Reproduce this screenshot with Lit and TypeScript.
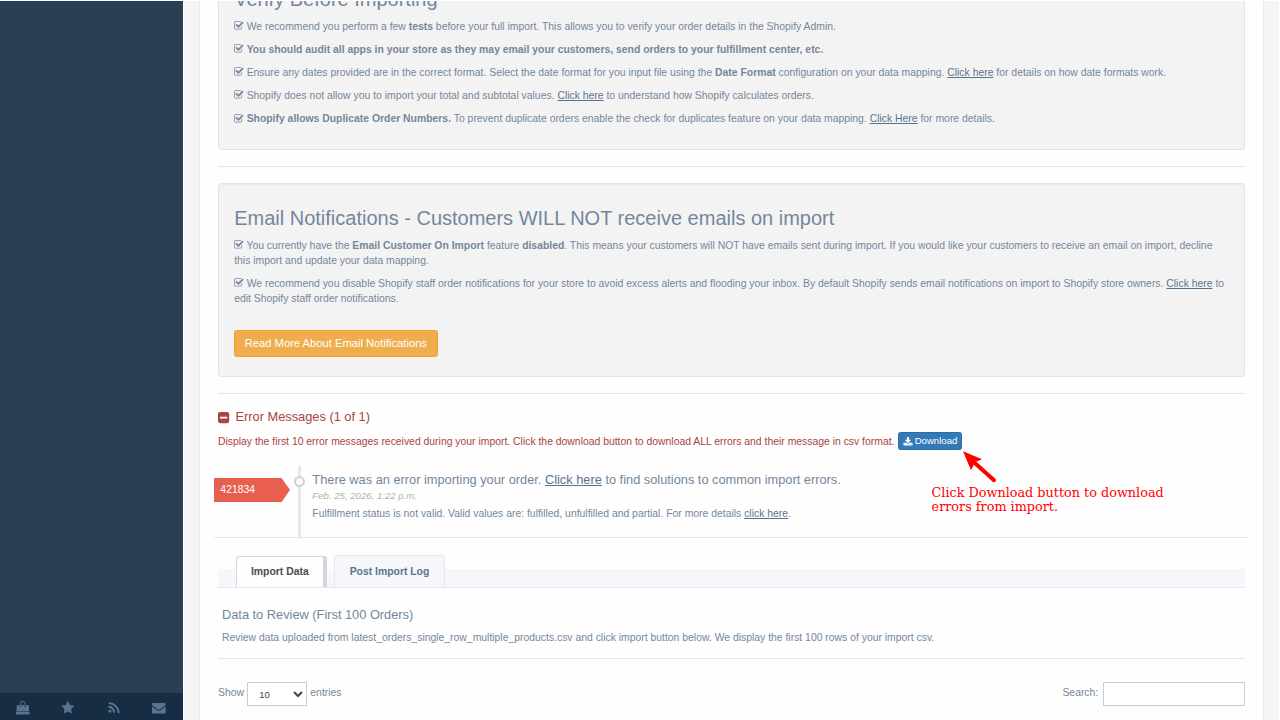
import { LitElement, html, css, svg } from "lit";
import { customElement, property } from "lit/decorators.js";

const glyphs: Record<string, unknown> = {
  check: svg`<path d="M1472 930v318q0 119-84.5 203.5t-203.5 84.5h-832q-119 0-203.5-84.5t-84.5-203.5v-832q0-119 84.5-203.5t203.5-84.5h832q63 0 117 25 15 7 18 23 3 17-9 29l-49 49q-10 10-23 10-3 0-9-2-23-6-45-6h-832q-66 0-113 47t-47 113v832q0 66 47 113t113 47h832q66 0 113-47t47-113v-254q0-13 9-22l64-64q10-10 23-10 6 0 12 3 20 8 20 29zm231-489l-814 814q-24 24-57 24t-57-24l-430-430q-24-24-24-57t24-57l110-110q24-24 57-24t57 24l263 263 647-647q24-24 57-24t57 24l110 110q24 24 24 57t-24 57z"/>`,
  minus: svg`<path fill-rule="evenodd" d="M416 128h960q119 0 203.500 84.500t84.500 203.500v960q0 119-84.500 203.500t-203.500 84.500h-960q-119 0-203.500-84.500t-84.500-203.500v-960q0-119 84.500-203.500t203.500-84.500zM448 768q-64 0-64 64v128q0 64 64 64h896q64 0 64-64v-128q0-64-64-64z"/>`,
  download: svg`<path d="M1344 1344q0-26-19-45t-45-19-45 19-19 45 19 45 45 19 45-19 19-45zm256 0q0-26-19-45t-45-19-45 19-19 45 19 45 45 19 45-19 19-45zm128-224v320q0 40-28 68t-68 28h-1472q-40 0-68-28t-28-68v-320q0-40 28-68t68-28h465l135 136q58 56 136 56t136-56l136-136h464q40 0 68 28t28 68zm-325-569q17 41-14 70l-448 448q-18 19-45 19t-45-19l-448-448q-31-29-14-70 17-39 59-39h256v-448q0-26 19-45t45-19h256q26 0 45 19t19 45v448h256q42 0 59 39z"/>`,
  bag: svg`<path d="M1757 1408l35 313q3 28-16 50-19 21-48 21h-1664q-29 0-48-21-19-22-16-50l35-313h1722zm-93-839l86 775h-1708l86-775q3-24 21-40.500t43-16.500h256v128q0 53 37.500 90.500t90.500 37.500 90.500-37.500 37.500-90.500v-128h384v128q0 53 37.500 90.500t90.500 37.500 90.500-37.500 37.500-90.500v-128h256q25 0 43 16.500t21 40.500zm-384-185v256q0 26-19 45t-45 19-45-19-19-45v-256q0-106-75-181t-181-75-181 75-75 181v256q0 26-19 45t-45 19-45-19-19-45v-256q0-159 112.500-271.500t271.500-112.500 271.500 112.500 112.500 271.500z"/>`,
  star: svg`<path d="M1728 647q0 22-26 48l-363 354 86 500q1 7 1 20 0 21-10.500 35.500t-30.500 14.500q-19 0-40-12l-449-236-449 236q-22 12-40 12-21 0-31.500-14.500t-10.500-35.500q0-6 2-20l86-500-364-354q-25-27-25-48 0-37 56-46l502-73 225-455q19-41 49-41t49 41l225 455 502 73q56 9 56 46z"/>`,
  rss: svg`<circle cx="384" cy="1344" r="192"/><path d="M256 640q347 24 571 265t249 567q0 64-64 64h-135q-58 0-64-59-22-232-186.500-396.500t-396.500-186.500q-58-6-58-64v-126q0-64 84-64zM256 128q575 24 983 432t433 976q-4 64-64 64h-143q-60 0-64-60-26-466-346-796t-792-352q-59-4-59-64v-136q0-64 52-64z"/>`,
  mail: svg`<path d="M1792 710v794q0 66-47 113t-113 47h-1472q-66 0-113-47t-47-113v-794q44 49 101 87 362 246 497 345 57 42 92.500 65.500t94.500 48 110 24.500h2q51 0 110-24.500t94.500-48 92.500-65.500q170-123 498-345 57-39 100-87zm0-294q0 79-49 151t-122 123q-376 261-468 325-10 7-42.500 31t-54 38.500-52 32.500-57.500 27-50 9h-2q-23 0-50-9t-57.500-27-52-32.500-54-38.500-42.500-31q-91-64-262-182.500t-205-142.500q-62-42-117-115.500t-55-136.500q0-78 41.500-130t118.500-52h1472q65 0 112.500 47t47.500 113z"/>`,
};

const boxes: Record<string, string> = {
  check: "64 128 1664 1430",
  minus: "128 128 1536 1536",
  download: "0 0 1728 1600",
};

@customElement("ui-icon")
class UiIcon extends LitElement {
  @property() name = "check";
  static styles = css`
    :host { display: inline-block; width: 12px; height: 11px; line-height: 0; }
    svg { display: block; width: 100%; height: 100%; fill: currentColor; overflow: visible; }
  `;
  render() {
    return html`<svg viewBox=${boxes[this.name] ?? "0 0 1792 1792"} aria-hidden="true">${glyphs[this.name]}</svg>`;
  }
}

@customElement("app-root")
class AppRoot extends LitElement {
  static styles = css`
    /* Compact density: the whole admin runs at 80% */
    :host {
      zoom: 0.8;
      display: flex; height: calc(100vh / 0.8); box-sizing: border-box; overflow: hidden;
      padding: 1px 1px 0 0; background: #fff; color: #73879c;
      font: 13px/19px "Liberation Sans", Arial, sans-serif;
    }
    * { box-sizing: border-box; }
    .sidebar { flex: 0 0 229px; display: flex; flex-direction: column; justify-content: flex-end; background: #2a3f54; }
    .tools { display: flex; height: 34px; padding-right: 2px; background: #172d44; }
    .tools a { flex: 1; display: flex; align-items: center; justify-content: center; color: #5a738e; padding-top: 4px; }
    .tools ui-icon { width: 17px; height: 17px; }
    .content { flex: 1; min-width: 0; overflow: hidden; padding: 0 19px; background: #f5f5f5; border-left: 1px solid #fff; }
    .panel { margin-top: -46px; padding: 0 22px; min-height: calc(100% + 46px); background: #fefefe; border: solid #e6e9ed; border-width: 0 2px 0 1px; }
    .well { padding: 29px 19px 18px; background: #f3f3f3; border: 1px solid #e3e3e3; border-radius: 4px; box-shadow: inset 0 1px 1px rgba(0,0,0,.05); }
    h2 { margin: 0 0 10px; font-size: 25px; line-height: 28px; font-weight: 400; }
    p { margin: 0 0 10px; }
    a { color: #5a738e; }
    hr { margin: 20px 0; border: 0; border-top: 1px solid #e6e6e6; }
    .warning { display: block; margin: 29px 0 6px; padding: 0 12px; height: 34px; font: 14px/32px "Liberation Sans", Arial, sans-serif; color: #fff; background: #f0ad4e; border: 1px solid #eea236; border-radius: 3px; }
    .errors { color: #a94442; }
    h3 { margin: 0; font-size: 16px; line-height: 18px; font-weight: 400; }
    .errors h3 { display: flex; align-items: center; gap: 8px; }
    .errors h3 ui-icon { width: 14px; height: 14px; }
    .errors p { display: flex; align-items: flex-start; gap: 4px; height: 23px; margin: 10px 0 19px; line-height: 24px; }
    .download { display: inline-flex; align-items: center; gap: 3px; height: 22px; padding: 0 5px; font: 12px/18px "Liberation Sans", Arial, sans-serif; color: #fff; background: #337ab7; border: 1px solid #2e6da4; border-radius: 3px; }
    .timeline { position: relative; display: flex; margin: 0 -5px 21px; height: 90px; border-bottom: 1px solid #e8e8e8; }
    .tag { width: 95px; height: 30px; margin-top: 15px; padding-left: 8px; line-height: 30px; color: #fff; background: #e95f4f; clip-path: polygon(0 0, 89% 0, 100% 50%, 89% 100%, 0 100%); }
    .rail { width: 4px; margin-left: 10px; background: #e8e8e8; display: flex; justify-content: center; }
    .dot { flex: none; width: 14px; height: 14px; margin-top: 12px; border: 3px solid #d2d2d2; border-radius: 50%; background: #f9f9f9; }
    .entry { padding: 9px 0 0 14px; }
    .byline { margin: 0 0 4px; font-size: 12px; font-style: italic; color: #aab6aa; }
    .note { position: absolute; left: 897px; top: -20px; color: #f00; font: 16px/18px "DejaVu Serif", serif; }
    .note svg { display: block; margin-left: 38px; }
    .note span { display: block; margin-top: 2px; }
    .tabs { display: flex; align-items: flex-end; gap: 9px; height: 42px; padding-left: 22px; background: linear-gradient(#fefefe 17px, #f5f7fa 17px); border-bottom: 1px solid #e6e9ed; }
    .tab { height: 41px; padding: 0 18px; font: bold 13px/39px "Liberation Sans", Arial, sans-serif; color: #5a738e; background: #f5f7fa; border: 1px solid #e6e9ed; border-bottom: 0; border-radius: 4px 4px 0 0; }
    .active { height: 39px; line-height: 37px; color: #4c4c4c; background: #fefefe; border-color: #d3d6da; border-right: 6px solid #d3d6da; }
    .review { padding: 25px 5px 16px; border-bottom: 2px solid #dfe6ec; margin-bottom: 29px; }
    .review p { margin: 9px 0 0; }
    .filters { display: flex; justify-content: space-between; line-height: 28px; }
    .filters label { display: flex; gap: 4px; }
    .filters .search { gap: 6px; }
    select, input { height: 30px; margin: 0; background: #fff; border: 1px solid #ccc; border-radius: 0; font: 12px "Liberation Sans", Arial, sans-serif; color: #444; }
    select { width: 75px; padding: 0 10px; }
    input { width: 178px; }
  `;

  render() {
    const tick = html`<ui-icon name="check"></ui-icon>`;
    return html`
      <aside class="sidebar">
        <nav class="tools">
          ${[["bag", "Store"], ["star", "Favorites"], ["rss", "Feed"], ["mail", "Mail"]].map(
            ([n, label]) => html`<a href="#" aria-label=${label}><ui-icon name=${n}></ui-icon></a>`
          )}
        </nav>
      </aside>
      <main class="content">
        <div class="panel">
          <section class="well">
            <h2>Verify Before Importing</h2>
            <p>${tick} We recommend you perform a few <b>tests</b> before your full import. This allows you to verify your order details in the Shopify Admin.</p>
            <p>${tick} <b>You should audit all apps in your store as they may email your customers, send orders to your fulfillment center, etc.</b></p>
            <p>${tick} Ensure any dates provided are in the correct format. Select the date format for you input file using the <b>Date Format</b> configuration on your data mapping. <a href="#">Click here</a> for details on how date formats work.</p>
            <p>${tick} Shopify does not allow you to import your total and subtotal values. <a href="#">Click here</a> to understand how Shopify calculates orders.</p>
            <p>${tick} <b>Shopify allows Duplicate Order Numbers.</b> To prevent duplicate orders enable the check for duplicates feature on your data mapping. <a href="#">Click Here</a> for more details.</p>
          </section>
          <hr />
          <section class="well">
            <h2>Email Notifications - Customers WILL NOT receive emails on import</h2>
            <p>${tick} You currently have the <b>Email Customer On Import</b> feature <b>disabled</b>. This means your customers will NOT have emails sent during import. If you would like your customers to receive an email on import, decline this import and update your data mapping.</p>
            <p>${tick} We recommend you disable Shopify staff order notifications for your store to avoid excess alerts and flooding your inbox. By default Shopify sends email notifications on import to Shopify store owners. <a href="#">Click here</a> to edit Shopify staff order notifications.</p>
            <button class="warning">Read More About Email Notifications</button>
          </section>
          <hr />
          <section class="errors">
            <h3><ui-icon name="minus"></ui-icon>Error Messages (1 of 1)</h3>
            <p><span>Display the first 10 error messages received during your import. Click the download button to download ALL errors and their message in csv format.</span>
              <button class="download"><ui-icon name="download"></ui-icon>Download</button></p>
          </section>
          <section class="timeline">
            <div class="tag">421834</div>
            <div class="rail"><div class="dot"></div></div>
            <div class="entry">
              <h3>There was an error importing your order. <a href="#">Click here</a> to find solutions to common import errors.</h3>
              <p class="byline">Feb. 25, 2026, 1:22 p.m.</p>
              <p>Fulfillment status is not valid. Valid values are: fulfilled, unfulfilled and partial. For more details <a href="#">click here</a>.</p>
            </div>
            <div class="note">
              <svg width="45" height="43" viewBox="0 0 36 34" aria-hidden="true">
                <path d="M12 12L32 30" stroke="#f00" stroke-width="4" stroke-linecap="round" />
                <path d="M1 1L20 9L13 12L9 20Z" fill="#f00" />
              </svg>
              <span>Click Download button to download<br />errors from import.</span>
            </div>
          </section>
          <div class="tabs" role="tablist">
            <button class="tab active" role="tab" aria-selected="true">Import Data</button>
            <button class="tab" role="tab" aria-selected="false">Post Import Log</button>
          </div>
          <section class="review">
            <h3>Data to Review (First 100 Orders)</h3>
            <p>Review data uploaded from latest_orders_single_row_multiple_products.csv and click import button below. We display the first 100 rows of your import csv.</p>
          </section>
          <div class="filters">
            <label>Show <select><option>10</option><option>25</option><option>50</option><option>100</option></select> entries</label>
            <label class="search">Search: <input type="search" /></label>
          </div>
        </div>
      </main>
    `;
  }
}
